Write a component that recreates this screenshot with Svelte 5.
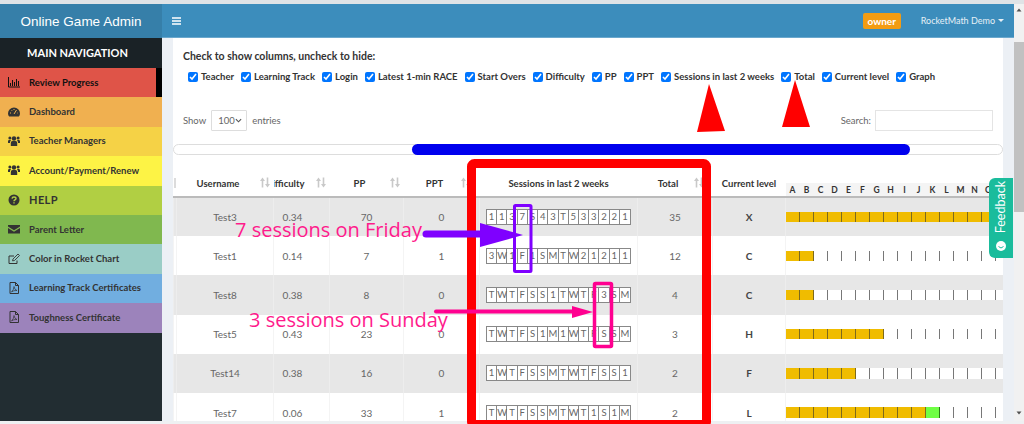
<script>
	const columns = ['Teacher', 'Learning Track', 'Login', 'Latest 1-min RACE', 'Start Overs', 'Difficulty', 'PP', 'PPT', 'Sessions in last 2 weeks', 'Total', 'Current level', 'Graph']
	const menu = [
		{ label: 'Review Progress', icon: 'bars', color: '#df5448', active: true },
		{ label: 'Dashboard', icon: 'gauge', color: '#f0b050' },
		{ label: 'Teacher Managers', icon: 'users', color: '#f5d246' },
		{ label: 'Account/Payment/Renew', icon: 'users', color: '#fdf345' },
		{ label: 'HELP', icon: 'help', color: '#b1cf43', big: true },
		{ label: 'Parent Letter', icon: 'mail', color: '#80b84f' },
		{ label: 'Color in Rocket Chart', icon: 'edit', color: '#9acdc6' },
		{ label: 'Learning Track Certificates', icon: 'pdf', color: '#71aee0' },
		{ label: 'Toughness Certificate', icon: 'pdf', color: '#9c83bb' }
	]
	const letters = 'ABCDEFGHIJKLMNO'.split('')
	const rows = [
		{ name: 'Test3', diff: '0.34', pp: 70, ppt: 0, days: '1 1 3 7 S 4 3 T 5 3 3 2 2 1', total: 35, level: 'X', done: 16 },
		{ name: 'Test1', diff: '0.14', pp: 7, ppt: 1, days: '3 W 1 F 1 S M T W 2 1 2 1 1', total: 12, level: 'C', done: 2 },
		{ name: 'Test8', diff: '0.38', pp: 8, ppt: 0, days: 'T W T F S S 1 T W T F 3 S M', total: 4, level: 'C', done: 2 },
		{ name: 'Test5', diff: '0.43', pp: 23, ppt: 0, days: 'T W T F S 1 M 1 W T F S S M', total: 3, level: 'H', done: 7 },
		{ name: 'Test14', diff: '0.38', pp: 16, ppt: 0, days: '1 W T F S S M T W T F S S 1', total: 2, level: 'F', done: 5 },
		{ name: 'Test7', diff: '0.06', pp: 33, ppt: 1, days: 'T W T F S S M T W T 1 S 1 M', total: 2, level: 'L', done: 10, current: 10 }
	]
	const cells = Array.from({ length: 16 }, (_, i) => i)
</script>

{#snippet sort()}
	<svg class="sort" viewBox="0 0 10 11" width="10" height="11">
		<path d="M2.5 0.5 L0 4 H1.7 V10.5 H3.3 V4 H5 Z M7.5 10.5 L5 7 H6.7 V0.5 H8.3 V7 H10 Z" fill="#c9c9c9"/>
	</svg>
{/snippet}

{#snippet icon(name)}
	<svg class="ico" viewBox="0 0 12 12" width="12" height="12">
		{#if name == 'bars'}
			<path d="M0.5 1 V11 H12 M2.5 10 V7 M4.5 10 V4 M6.5 10 V6 M8.5 10 V3 M10.5 10 V5" fill="none" stroke="currentColor" stroke-width="1"/>
		{:else if name == 'gauge'}
			<path d="M6 1.5 A6 6 0 0 0 0 7.5 Q0 9.5 1.2 10.5 H10.8 Q12 9.5 12 7.5 A6 6 0 0 0 6 1.5 Z" fill="currentColor"/>
			<path d="M6 8 L8.5 4 M2 7 H3 M3.5 4 L4 4.7 M6 3 V4 M9.5 7 H10" stroke="#f0b050" stroke-width="1"/>
		{:else if name == 'users'}
			<circle cx="6" cy="3.5" r="2.2" fill="currentColor"/>
			<circle cx="1.9" cy="3" r="1.5" fill="currentColor"/>
			<circle cx="10.1" cy="3" r="1.5" fill="currentColor"/>
			<path d="M2.8 11 V7.8 Q2.8 6 4.5 6 H7.5 Q9.2 6 9.2 7.8 V11 Z M0 8 V6.3 Q0 5 1.3 5 H3 L2 7 V8 Z M12 8 V6.3 Q12 5 10.7 5 H9 L10 7 V8 Z" fill="currentColor"/>
		{:else if name == 'help'}
			<circle cx="6" cy="6" r="5.5" fill="currentColor"/>
			<path d="M4 4.7 Q4.2 3 6 3 Q8 3 8 4.6 Q8 5.6 6.8 6 Q6 6.4 6 7.3 M6 8.2 V9.6" fill="none" stroke="#b1cf43" stroke-width="1.4"/>
		{:else if name == 'mail'}
			<path d="M0 2 H12 V3.5 L6 7.2 L0 3.5 Z M0 5 L6 8.8 L12 5 V10.5 H0 Z" fill="currentColor"/>
		{:else if name == 'edit'}
			<path d="M9 7.5 V10.5 H1 V3 H6" fill="none" stroke="currentColor" stroke-width="1"/>
			<path d="M4.5 7.8 L5 6 L10 1 L11.5 2.5 L6.5 7.5 Z" fill="none" stroke="currentColor" stroke-width="0.9"/>
		{:else}
			<path d="M2 0.5 H7.5 L10.5 3.5 V11.5 H2 Z M7.5 0.5 V3.5 H10.5" fill="none" stroke="currentColor" stroke-width="1"/>
			<path d="M3.5 10 Q6 7.5 6 4.5 Q6.5 8 9 8.5 Q5.5 8.2 3.5 10 Z" fill="none" stroke="currentColor" stroke-width="0.7"/>
		{/if}
	</svg>
{/snippet}

<div class="page">
	<div class="topline"></div>
	<div class="shell">
		<aside class="sidebar">
			<div class="logo">Online Game Admin</div>
			<div class="navhead">MAIN NAVIGATION</div>
			{#each menu as item}
				<div class="menuitem" class:active={item.active} class:big={item.big} style="background:{item.color}">
					{@render icon(item.icon)}
					<span>{item.label}</span>
				</div>
			{/each}
		</aside>

		<div class="main">
			<header class="topbar">
				<svg class="burger" viewBox="0 0 9 8" width="9" height="8"><path d="M0 1 H9 M0 4 H9 M0 7 H9" stroke="#fff" stroke-width="1.5"/></svg>
				<span class="owner">owner</span>
				<span class="account">RocketMath Demo <i class="caret"></i></span>
			</header>

			<div class="content">
				<section class="box">
					<p class="hint">Check to show columns, uncheck to hide:</p>
					<div class="checks">
						{#each columns as col}
							<label><input type="checkbox" checked />{col}</label>
						{/each}
					</div>

					<div class="tools">
						<div class="show">
							Show
							<span class="select">100 <svg viewBox="0 0 8 5" width="7" height="5"><path d="M1 1 L4 4 L7 1" fill="none" stroke="#555" stroke-width="1.3"/></svg></span>
							entries
						</div>
						<div class="search">Search: <span class="searchinput"></span></div>
					</div>

					<div class="hscroll"><div class="thumb"></div></div>

					<table>
						<colgroup>
							<col class="c-stub" /><col class="c-user" /><col class="c-diff" /><col class="c-pp" /><col class="c-ppt" /><col class="c-sess" /><col class="c-total" /><col class="c-level" /><col class="c-graph" />
						</colgroup>
						<thead>
							<tr>
								<th><div class="stub"></div></th>
								<th><div class="th sorted">Username</div>{@render sort()}</th>
								<th class="clip"><div class="th difficulty">Difficulty</div>{@render sort()}</th>
								<th><div class="th sorted">PP</div>{@render sort()}</th>
								<th class="ppt"><div class="th sorted">PPT</div>{@render sort()}</th>
								<th><div class="th">Sessions in last 2 weeks</div></th>
								<th class="total"><div class="th sorted">Total</div>{@render sort()}</th>
								<th><div class="th">Current level</div></th>
								<th class="graphhead">
									<div class="letters">
										{#each letters as l}<span>{l}</span>{/each}
									</div>
								</th>
							</tr>
						</thead>
						<tbody>
							{#each rows as row, r}
								<tr class:odd={r % 2 == 0}>
									<td></td>
									<td>{row.name}</td>
									<td class="diffcell">{row.diff}</td>
									<td>{row.pp}</td>
									<td>{row.ppt}</td>
									<td>
										<div class="days">
											{#each row.days.split(' ') as d}<span>{d}</span>{/each}
										</div>
									</td>
									<td>{row.total}</td>
									<td class="lvl">{row.level}</td>
									<td class="graphcell">
										<div class="graph">
											{#each cells as c}
												<span class:done={c < row.done} class:current={c === row.current}></span>
											{/each}
										</div>
									</td>
								</tr>
							{/each}
						</tbody>
					</table>
				</section>
			</div>
		</div>

		<div class="vscroll">
			<svg viewBox="0 0 10 6" width="10" height="6"><path d="M2.5 4.5 L5 1.5 L7.5 4.5 Z" fill="#505050"/></svg>
			<div class="vthumb"></div>
			<svg class="down" viewBox="0 0 10 6" width="10" height="6"><path d="M2.5 1.5 L5 4.5 L7.5 1.5 Z" fill="#505050"/></svg>
		</div>
	</div>
	<div class="bottomline"></div>

	<!-- annotations drawn on top of the screenshot -->
	<svg class="marks" viewBox="0 0 1024 424" width="1024" height="424">
		<path d="M709 84 L725 131 L697 132 Z M795 80 L810 127 L782 127 Z" fill="#ff0000"/>
		<rect x="471.5" y="163.5" width="235" height="261" rx="3" fill="none" stroke="#ff0000" stroke-width="9"/>
		<rect x="514.5" y="205.5" width="16.5" height="66" rx="1" fill="none" stroke="#7f00ff" stroke-width="3"/>
		<path d="M426 234 H482" stroke="#7f00ff" stroke-width="7" stroke-linecap="round"/>
		<path d="M480 223 L523 235 L480 247 Z" fill="#7f00ff"/>
		<rect x="594.5" y="283.5" width="17" height="63" rx="1" fill="none" stroke="#ff0090" stroke-width="3.5"/>
		<path d="M436 311.5 H574" stroke="#ff0090" stroke-width="4" stroke-linecap="round"/>
		<path d="M572 306 L593 312 L572 318 Z" fill="#ff0090"/>
	</svg>
	<span class="note friday">7 sessions on Friday</span>
	<span class="note sunday">3 sessions on Sunday</span>

	<div class="feedback">
		<span>Feedback</span>
		<svg viewBox="0 0 10 10" width="10" height="10"><circle cx="5" cy="5" r="5" fill="#fff"/><path d="M2.5 5.5 Q5 8.5 7.5 5.5" fill="none" stroke="#1abc9c" stroke-width="1"/></svg>
	</div>
</div>

<style>
	:global(body) {
		margin: 0;
		background: #fff;
	}
	.page {
		position: relative;
		width: 1024px;
		height: 424px;
		overflow: hidden;
		font-family: Lato, sans-serif;
		font-size: 10px;
		color: #444;
		display: flex;
		flex-direction: column;
	}
	.topline {
		height: 4px;
		flex: none;
		background: #dfe3e6;
	}
	.bottomline {
		height: 3px;
		flex: none;
		background: #eef0f2;
	}
	.shell {
		flex: 1;
		min-height: 0;
		display: flex;
	}
	.sidebar {
		width: 162px;
		flex: none;
		background: #222d32;
	}
	.logo {
		height: 34px;
		background: #367fa9;
		color: #fff;
		font-family: "Liberation Sans", sans-serif;
		font-size: 13.5px;
		display: flex;
		align-items: center;
		justify-content: center;
	}
	.navhead {
		height: 30px;
		background: #1a2226;
		color: #fff;
		font-weight: 700;
		font-size: 11px;
		display: flex;
		align-items: center;
		justify-content: center;
		padding: 0 7px 2px 0;
		box-sizing: border-box;
	}
	.menuitem {
		height: 29.4px;
		display: flex;
		align-items: center;
		gap: 9px;
		padding: 0 0 1px 8px;
		font-weight: 700;
		font-size: 9.5px;
		color: #333;
		box-sizing: border-box;
	}
	.menuitem.active {
		color: #111;
		border-right: 6px solid #000;
	}
	.menuitem.big {
		font-size: 11px;
		letter-spacing: 0.4px;
	}
	.ico {
		flex: none;
	}
	.main {
		flex: 1;
		min-width: 0;
		display: flex;
		flex-direction: column;
		background: #ecf0f5;
	}
	.topbar {
		height: 34px;
		flex: none;
		background: #3c8dbc;
		display: flex;
		align-items: center;
		padding: 0 10px 0 10px;
		box-sizing: border-box;
		border-bottom: 1px solid #6ba8cd;
	}
	.burger {
		margin-right: auto;
	}
	.owner {
		background: #f39c12;
		color: #fff;
		font-weight: 700;
		font-size: 10px;
		width: 38px;
		height: 16px;
		line-height: 16px;
		text-align: center;
		border-radius: 2px;
		margin-right: 20px;
	}
	.account {
		color: #e6f0f6;
		font-size: 9px;
		display: flex;
		align-items: center;
		gap: 3px;
	}
	.caret {
		width: 0;
		height: 0;
		border: 3px solid transparent;
		border-top-color: #e6f0f6;
		border-bottom: 0;
	}
	.content {
		flex: 1;
		min-height: 0;
		padding: 0 11px;
	}
	.box {
		background: #fff;
		height: 100%;
		overflow: hidden;
		padding-top: 11px;
		box-sizing: border-box;
	}
	.hint {
		margin: 0 0 0 10px;
		font-weight: 700;
		font-size: 10.5px;
		line-height: 14px;
		color: #333;
	}
	.checks {
		display: flex;
		gap: 7px;
		margin: 7px 0 0 15px;
		font-weight: 700;
		font-size: 9.5px;
		color: #333;
		white-space: nowrap;
	}
	.checks label {
		display: flex;
		align-items: center;
		gap: 3px;
		line-height: 14px;
	}
	.checks input {
		width: 10px;
		height: 10px;
		margin: 0;
		accent-color: #0075ff;
	}
	.tools {
		display: flex;
		justify-content: space-between;
		align-items: center;
		margin-top: 26px;
		padding: 0 10px;
		font-size: 9.5px;
		color: #666;
	}
	.show {
		display: flex;
		align-items: center;
		gap: 5px;
	}
	.select {
		width: 36px;
		height: 21px;
		border: 1px solid #ddd;
		box-sizing: border-box;
		display: flex;
		align-items: center;
		justify-content: space-between;
		padding: 0 4px 0 6px;
		border-radius: 1px;
	}
	.search {
		display: flex;
		align-items: center;
		gap: 4px;
	}
	.searchinput {
		width: 118px;
		height: 21px;
		border: 1px solid #e4e4e4;
		box-sizing: border-box;
	}
	.hscroll {
		height: 11px;
		margin-top: 13px;
		border: 1px solid #ddd;
		border-radius: 6px;
		box-sizing: border-box;
		padding-left: 238px;
		display: flex;
	}
	.thumb {
		width: 498px;
		height: 11px;
		margin-top: -1px;
		background: #0000ee;
		border-radius: 6px;
	}
	table {
		width: 830px;
		table-layout: fixed;
		border-collapse: collapse;
		margin-top: 4px;
	}
	.c-stub { width: 3px; }
	.c-user { width: 97px; }
	.c-diff { width: 56px; }
	.c-pp { width: 74px; }
	.c-ppt { width: 76px; }
	.c-sess { width: 158px; }
	.c-total { width: 75px; }
	.c-level { width: 73px; }
	.c-graph { width: 218px; }
	th {
		height: 38px;
		padding: 11px 0 0;
		position: relative;
		font-weight: 700;
		font-size: 9.5px;
		color: #333;
		border-bottom: 2px solid #bbb;
		box-sizing: border-box;
	}
	.th {
		white-space: nowrap;
	}
	.stub {
		width: 2px;
		height: 10px;
		background: #dcdcdc;
	}
	.sorted {
		padding-right: 14px;
	}
	th.clip {
		overflow: hidden;
	}
	.difficulty {
		display: flex;
		justify-content: flex-end;
		padding-right: 25px;
	}
	.sort {
		position: absolute;
		right: 4px;
		top: 18px;
	}
	.ppt .sort {
		right: 9px;
	}
	.total .sort {
		right: 9px;
	}
	.graphhead {
		vertical-align: bottom;
	}
	.letters {
		background: #f4f4f4;
		height: 13px;
		line-height: 15px;
		display: flex;
		overflow: hidden;
		font-size: 8.5px;
		font-weight: 700;
	}
	.letters span {
		width: 14px;
		flex: none;
		text-align: center;
	}
	td {
		height: 39.2px;
		padding: 0;
		text-align: center;
		border-left: 1px solid #f4f4f4;
		color: #666;
		box-sizing: border-box;
	}
	tr.odd td {
		background: #e7e7e7;
		border-left-color: #ededed;
	}
	.diffcell {
		padding-right: 18px;
	}
	.lvl {
		color: #444;
		font-weight: 700;
	}
	.days {
		display: grid;
		grid-template-columns: repeat(14, minmax(0, 1fr));
		width: 145px;
		height: 16px;
		margin: 0 auto;
		border: 1px solid #888;
		box-sizing: border-box;
		background: #fff;
	}
	.days span {
		border-right: 1px solid #888;
		line-height: 14px;
		font-size: 9.5px;
	}
	.days span:last-child {
		border-right: 0;
	}
	.graphcell {
		overflow: hidden;
	}
	.graph {
		display: flex;
		height: 10.5px;
		overflow: hidden;
	}
	.graph span {
		width: 14px;
		flex: none;
		box-sizing: border-box;
		background: #fff;
		border-right: 1px solid #777;
	}
	.graph span.done {
		background: #f0bc00;
		border-right-color: #7d6a1c;
	}
	.graph span.current {
		background: #6fff44;
		border-right-color: #2c7a1a;
	}
	.vscroll {
		width: 10px;
		flex: none;
		background: #f1f1f1;
		position: relative;
		display: flex;
		flex-direction: column;
		padding-top: 3px;
		box-sizing: border-box;
	}
	.vthumb {
		margin-top: 29px;
		height: 170px;
		background: #c1c1c1;
	}
	.down {
		margin-top: auto;
		margin-bottom: 5px;
	}
	.marks {
		position: absolute;
		left: 0;
		top: 0;
		pointer-events: none;
	}
	.note {
		position: absolute;
		font-family: "Open Sans", sans-serif;
		font-size: 20px;
		line-height: 24px;
		color: #ff1a8c;
		white-space: nowrap;
	}
	.friday {
		left: 235px;
		top: 218px;
	}
	.sunday {
		left: 249px;
		top: 308px;
	}
	.feedback {
		position: absolute;
		left: 989px;
		top: 178px;
		width: 24px;
		height: 80px;
		background: #1abc9c;
		border-radius: 6px 0 0 6px;
		display: flex;
		flex-direction: column;
		align-items: center;
		justify-content: space-between;
		padding: 3px 0 7px;
		box-sizing: border-box;
		color: #fff;
	}
	.feedback span {
		writing-mode: vertical-rl;
		transform: rotate(180deg);
		font-size: 12.5px;
		line-height: 14px;
	}
</style>
